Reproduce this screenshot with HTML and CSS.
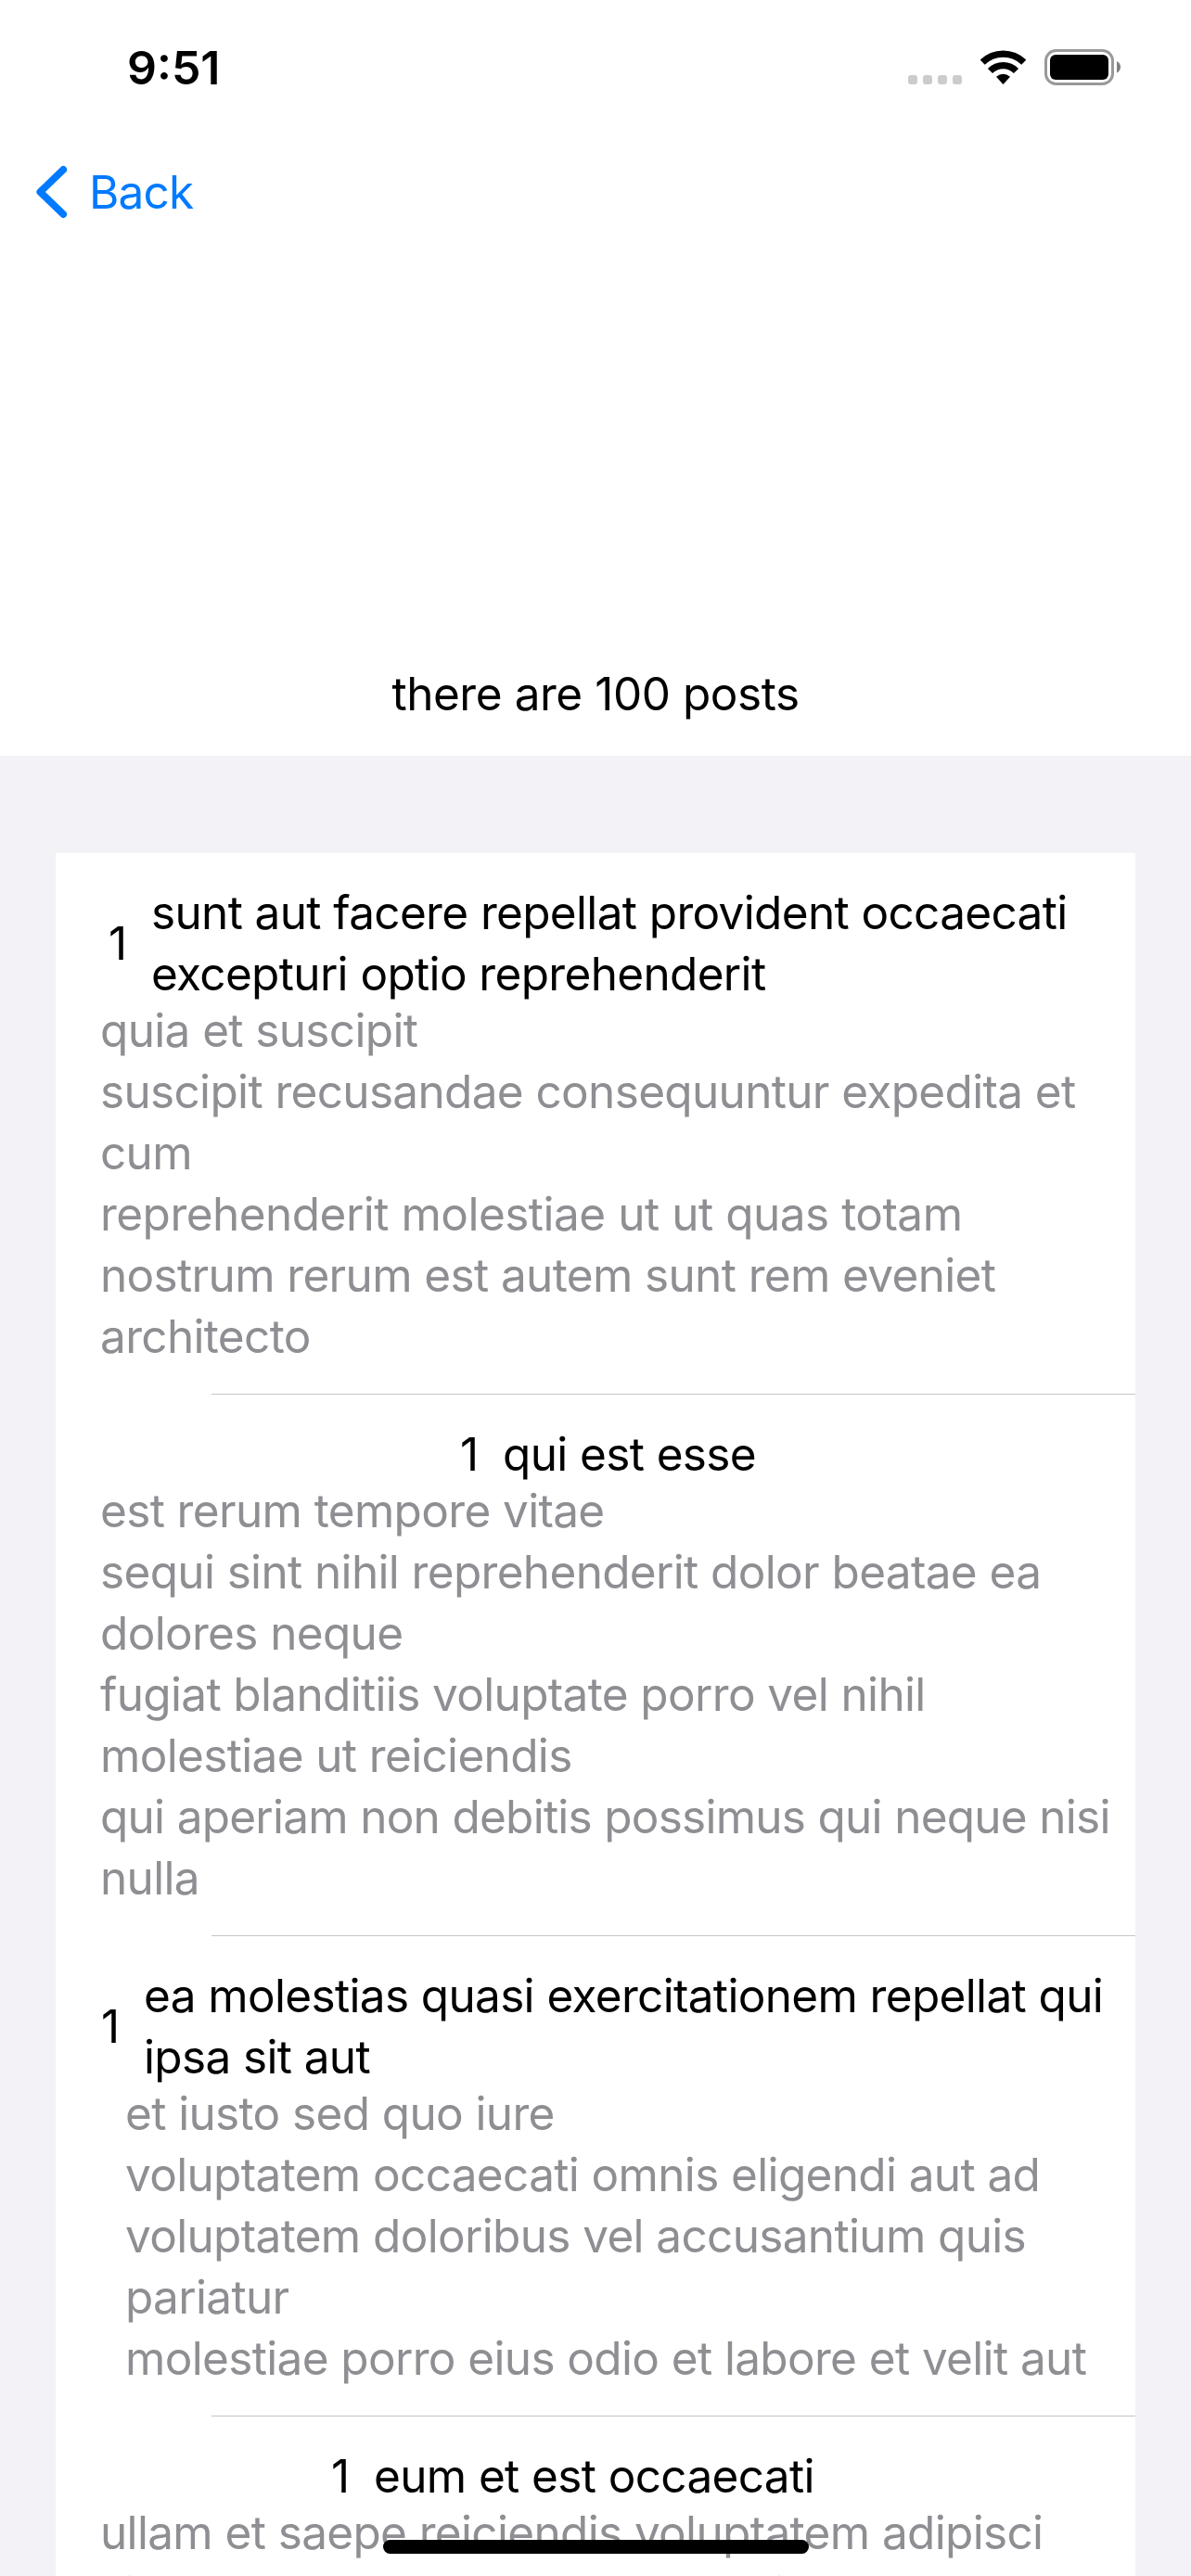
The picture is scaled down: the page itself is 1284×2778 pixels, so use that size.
FILE: index.html
```html
<!DOCTYPE html>
<html lang="en">
<head>
<meta charset="utf-8">
<title>Posts</title>
<link rel="stylesheet" href="styles.css">
</head>
<body>
<div class="screen">
  <header class="status">
    <div class="time">9:51</div>
    <div class="indicators">
      <div class="cellular"><i></i><i></i><i></i><i></i></div>
      <svg class="wifi" viewBox="0 0 52 38" width="52" height="38">
        <path class="arc" d="M3.2 13.2A32 32 0 0 1 47.8 13.2"/>
        <path class="arc" d="M11.5 22.5A19.6 19.6 0 0 1 39.5 22.5"/>
        <path d="M18 28.8Q25.5 22.8 33 28.8L25.5 37Z"/>
      </svg>
      <svg class="battery" viewBox="0 0 83 39" width="83" height="39">
        <rect class="shell" x="1.5" y="1.5" width="72" height="36" rx="11"/>
        <rect x="6" y="6" width="63" height="27" rx="6"/>
        <path class="cap" d="M78 13Q82 15 82 19.3T78 25.6Z"/>
      </svg>
    </div>
  </header>
  <nav class="nav">
    <svg class="chevron" viewBox="0 0 34 58" width="34" height="58"><path d="M29.2 5L4.3 29L29.2 53"/></svg>
    <span class="back">Back</span>
  </nav>
  <div class="summary">there are 100 posts</div>
  <main class="list">
    <div class="card">
      <article class="post post-a">
        <div class="heading"><span class="num">1</span><h2 class="lines"><span>sunt aut facere repellat provident occaecati</span><span>excepturi optio reprehenderit</span></h2></div>
        <p class="lines body"><span>quia et suscipit</span><span>suscipit recusandae consequuntur expedita et</span><span>cum</span><span class="loose">reprehenderit molestiae ut ut quas totam</span><span>nostrum rerum est autem sunt rem eveniet</span><span>architecto</span></p>
      </article>
      <article class="post post-b">
        <div class="heading"><span class="num">1</span><h2 class="lines"><span>qui est esse</span></h2></div>
        <p class="lines body"><span>est rerum tempore vitae</span><span>sequi sint nihil reprehenderit dolor beatae ea</span><span>dolores neque</span><span>fugiat blanditiis voluptate porro vel nihil</span><span>molestiae ut reiciendis</span><span class="tight">qui aperiam non debitis possimus qui neque nisi</span><span>nulla</span></p>
      </article>
      <article class="post post-c">
        <div class="heading"><span class="num">1</span><h2 class="lines"><span>ea molestias quasi exercitationem repellat qui</span><span>ipsa sit aut</span></h2></div>
        <p class="lines body"><span>et iusto sed quo iure</span><span>voluptatem occaecati omnis eligendi aut ad</span><span>voluptatem doloribus vel accusantium quis</span><span>pariatur</span><span>molestiae porro eius odio et labore et velit aut</span></p>
      </article>
      <article class="post post-d">
        <div class="heading"><span class="num">1</span><h2 class="lines"><span>eum et est occaecati</span></h2></div>
        <p class="lines body"><span>ullam et saepe reiciendis voluptatem adipisci</span><span>sit amet autem assumenda provident rerum</span></p>
      </article>
    </div>
  </main>
  <div class="home-indicator"></div>
</div>
</body>
</html>
```
FILE: styles.css
```css
* { box-sizing: border-box; margin: 0; padding: 0; }

body { background: #fff; }

.screen {
  position: relative;
  display: flex;
  flex-direction: column;
  width: 1284px;
  height: 2778px;
  overflow: hidden;
  background: #fff;
  color: #000;
  font: 400 49.5px/66px Inter, "Liberation Sans", sans-serif;
  letter-spacing: -0.67px;
  word-spacing: 0.2px;
  white-space: nowrap;
}

.status {
  display: flex;
  justify-content: space-between;
  align-items: flex-start;
  height: 141px;
  padding: 40px 75px 0 137px;
}

.time { font-size: 50px; font-weight: 600; letter-spacing: 0; }

.indicators { display: flex; align-items: flex-end; padding-top: 13px; }

.cellular { display: flex; gap: 6px; margin: 0 19px 1px 0; }
.cellular i { width: 10px; height: 10px; border-radius: 3px; background: #ccc; }

.wifi { margin-right: 18px; }
.wifi .arc { fill: none; stroke: #000; stroke-width: 7.2; }

.battery .shell { fill: none; stroke: #999; stroke-width: 3; }
.battery .cap { fill: #808080; }

.nav {
  display: flex;
  align-items: center;
  height: 132px;
  padding-left: 39px;
  color: #007aff;
}
.chevron { margin-right: 23px; }
.chevron path {
  fill: none;
  stroke: #007aff;
  stroke-width: 7.8;
  stroke-linecap: round;
  stroke-linejoin: round;
}
.back { letter-spacing: -0.8px; }

.summary {
  height: 542px;
  padding-top: 442px;
  text-align: center;
  letter-spacing: -0.49px;
}

.list {
  flex: 1;
  padding: 105px 60px 0;
  background: #f2f2f7;
}

.card { height: 1858px; background: #fff; }

.post {
  padding: 33px 0 33px 48px;
  background: linear-gradient(#c6c6c8, #c6c6c8) 168px 100% / 100% 1px no-repeat;
}

.heading { display: flex; align-items: center; }
.post-a .heading { padding-left: 9px; }
.post-b .heading { padding-left: 388px; }
.post-c .heading { padding-left: 1px; }
.post-d .heading { padding-left: 249px; }
.post-c .body { padding-left: 27px; }

.num { width: 46px; margin: -2px 0 -3px; }

.lines { margin: -2px 0 -3px; font-size: inherit; font-weight: 400; }
.lines span { display: block; }
.lines .loose { letter-spacing: -0.53px; }
.lines .tight { letter-spacing: -0.76px; }

.body { color: #8e8e93; }

.home-indicator {
  position: absolute;
  left: 413px;
  bottom: 24px;
  width: 459px;
  height: 15px;
  border-radius: 8px;
  background: #000;
}
```
